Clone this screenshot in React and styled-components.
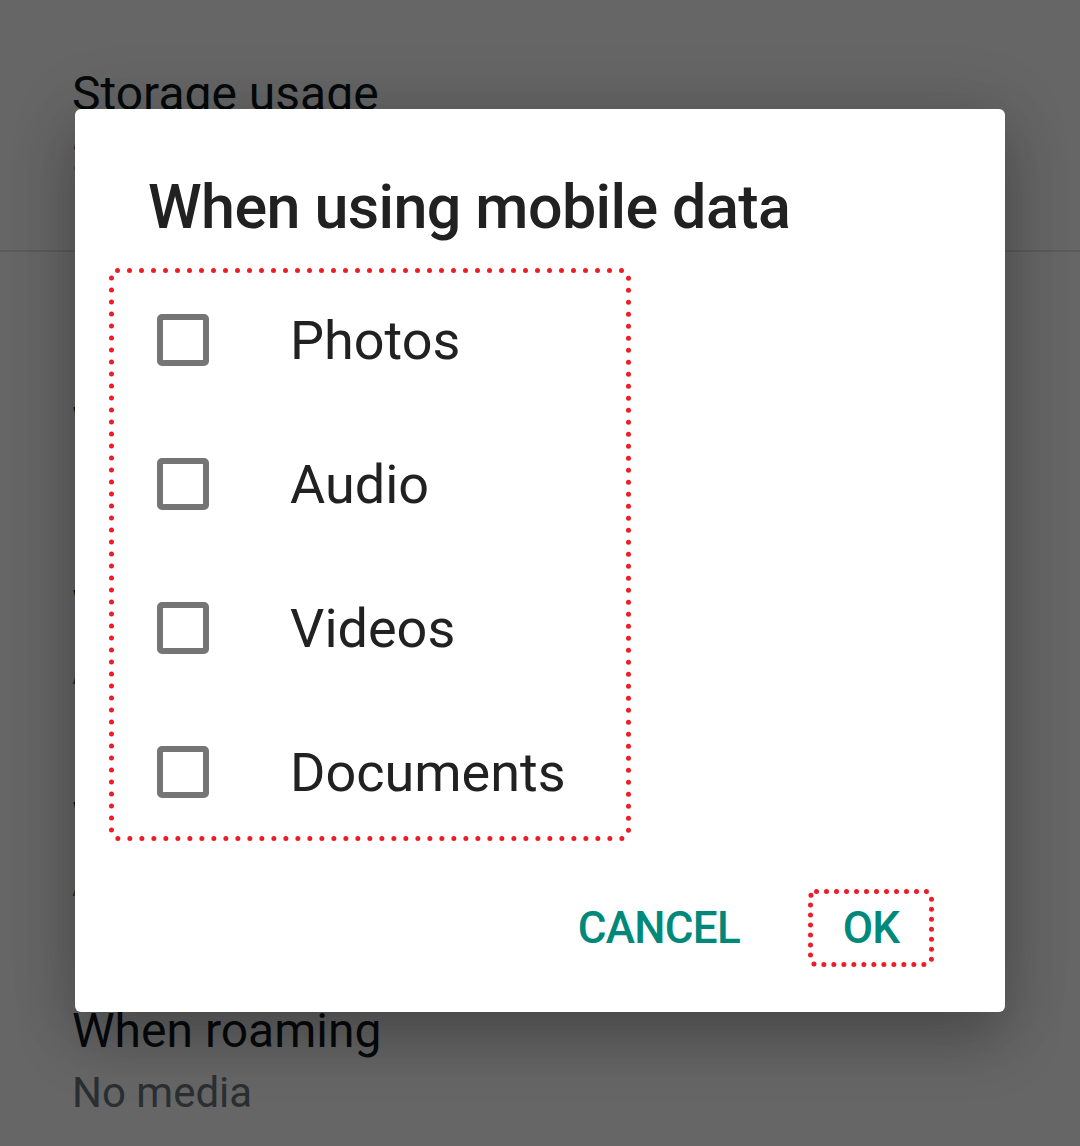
import React from "react";
import styled, { createGlobalStyle } from "styled-components";

const Global = createGlobalStyle`
  html, body { margin: 0; padding: 0; }
  body {
    width: 1080px;
    height: 1146px;
    overflow: hidden;
    background: #ffffff;
    font-family: Roboto, "Noto Sans", "Liberation Sans", sans-serif;
  }
`;

const Page = styled.div`
  position: relative;
  width: 1080px;
  height: 1146px;
  background: #ffffff;
  overflow: hidden;
`;

const Settings = styled.div`
  display: flex;
  flex-direction: column;
`;

const SettingItem = styled.div`
  display: flex;
  flex-direction: column;
  padding: ${(p) => p.$top}px 40px 0 72px;
  height: ${(p) => p.$height}px;
  box-sizing: border-box;
`;

const SettingTitle = styled.div`
  font-size: 48px;
  line-height: 56px;
  color: #111b21;
  white-space: nowrap;
`;

const SettingSub = styled.div`
  margin-top: 9px;
  font-size: 42px;
  line-height: 50px;
  color: #667781;
  white-space: nowrap;
`;

const Divider = styled.div`
  height: 2px;
  background: #e1e1e1;
`;

const Scrim = styled.div`
  position: absolute;
  inset: 0;
  background: rgba(0, 0, 0, 0.6);
  display: flex;
  justify-content: center;
  align-items: flex-start;
  padding-top: 109px;
`;

const Dialog = styled.div`
  width: 930px;
  height: 903px;
  box-sizing: border-box;
  background: #ffffff;
  border-radius: 6px;
  box-shadow: 0 30px 60px rgba(0, 0, 0, 0.22), 0 0 70px rgba(0, 0, 0, 0.14);
  display: flex;
  flex-direction: column;
  padding: 62px 71px 45px 34px;
`;

const Title = styled.h2`
  margin: 0 0 25px 39px;
  font-size: 61px;
  line-height: 72px;
  letter-spacing: -0.6px;
  font-weight: 500;
  color: #212121;
  white-space: nowrap;
`;

const ChoiceList = styled.div`
  position: relative;
  width: 522px;
  height: 573px;
  display: flex;
  flex-direction: column;
`;

const ChoiceRow = styled.label`
  display: flex;
  align-items: center;
  height: 144px;
  flex: none;
  padding-left: 48px;
  gap: 81px;
`;

const CheckBox = styled.span`
  width: 52px;
  height: 52px;
  box-sizing: border-box;
  border: 6px solid #757575;
  border-radius: 5px;
  flex: none;
`;

const ChoiceText = styled.span`
  font-size: 54px;
  color: #212121;
  white-space: nowrap;
`;

const Frame = styled.svg`
  position: absolute;
  left: 0;
  top: 0;
  pointer-events: none;
  overflow: visible;
`;

function DottedFrame({ w, h, step }) {
  return (
    <Frame width={w} height={h} viewBox={`0 0 ${w} ${h}`}>
      <rect
        x="2.5"
        y="2.5"
        width={w - 5}
        height={h - 5}
        rx="6"
        fill="none"
        stroke="#ee1c25"
        strokeWidth="5"
        strokeLinecap="round"
        strokeDasharray={`0 ${step}`}
      />
    </Frame>
  );
}

const Actions = styled.div`
  margin-top: auto;
  display: flex;
  justify-content: flex-end;
  align-items: center;
  gap: 32px;
`;

const ActionButton = styled.button`
  position: relative;
  height: 78px;
  width: ${(p) => (p.$w ? `${p.$w}px` : "auto")};
  padding: 0 ${(p) => (p.$w ? 0 : 36)}px;
  box-sizing: border-box;
  border: none;
  background: transparent;
  font-family: Roboto, "Noto Sans", sans-serif;
  font-size: 44px;
  letter-spacing: -0.7px;
  font-weight: 500;
  color: #00897b;
  text-transform: uppercase;
  text-align: center;
  cursor: pointer;
`;

const choices = ["Photos", "Audio", "Videos", "Documents"];

export default function App() {
  return (
    <Page>
      <Global />
      <Settings>
        <SettingItem $top={66} $height={250}>
          <SettingTitle>Storage usage</SettingTitle>
          <SettingSub>2.1 GB</SettingSub>
        </SettingItem>
        <Divider />
        <SettingItem $top={145} $height={328}>
          <SettingTitle>When using mobile data</SettingTitle>
          <SettingSub>Photos</SettingSub>
        </SettingItem>
        <SettingItem $top={0} $height={212}>
          <SettingTitle>When connected on Wi-Fi</SettingTitle>
          <SettingSub>All media</SettingSub>
        </SettingItem>
        <SettingItem $top={0} $height={211}>
          <SettingTitle>Wi-Fi only</SettingTitle>
          <SettingSub>All media</SettingSub>
        </SettingItem>
        <SettingItem $top={0} $height={140}>
          <SettingTitle>When roaming</SettingTitle>
          <SettingSub>No media</SettingSub>
        </SettingItem>
      </Settings>
      <Scrim>
        <Dialog>
          <Title>When using mobile data</Title>
          <ChoiceList>
            {choices.map((c) => (
              <ChoiceRow key={c}>
                <CheckBox />
                <ChoiceText>{c}</ChoiceText>
              </ChoiceRow>
            ))}
            <DottedFrame w={522} h={573} step={12} />
          </ChoiceList>
          <Actions>
            <ActionButton>Cancel</ActionButton>
            <ActionButton $w={126}>
              OK
              <DottedFrame w={126} h={78} step={10} />
            </ActionButton>
          </Actions>
        </Dialog>
      </Scrim>
    </Page>
  );
}
